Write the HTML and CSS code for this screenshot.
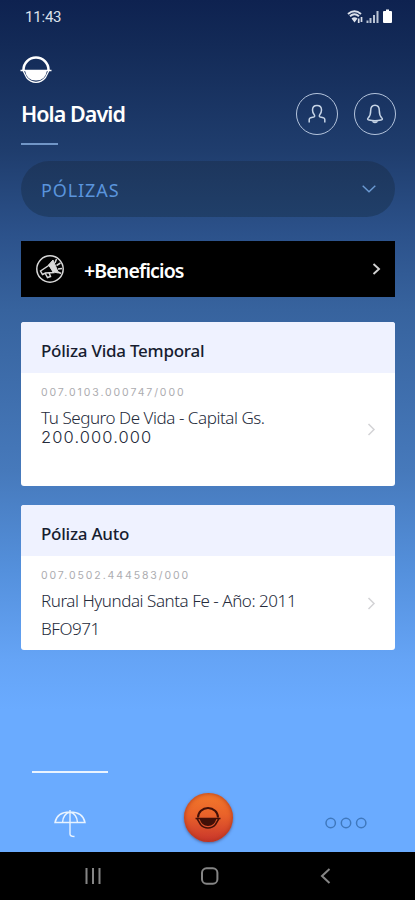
FILE: index.html
```html
<!DOCTYPE html>
<html lang="es">
<head>
    <meta charset="UTF-8">
    <meta name="viewport" content="width=device-width, initial-scale=1.0">
    <title>Pólizas</title>
    <link rel="stylesheet" href="styles.css">
</head>
<body>
    <div class="status-bar">
        <span class="time">11:43</span>
        <svg class="status-icons" width="46" height="16" viewBox="0 0 46 16" fill="none">
            <path d="M1 5Q7.500 -.500 14 5M3 7.300Q7.500 3.300 12 7.300" stroke="#dce1eb" stroke-width="2"/>
            <path d="M7.500 13.500l-3-4q3-2.500 6 0z" fill="#dce1eb"/>
            <path d="M11.700 14V9.500M14.500 8v5" stroke="#dce1eb" stroke-width="1.700"/>
            <path d="M20.500 14v-2.500M23.500 14V9M27 14V6M30.500 14V2" stroke="#bac4d5" stroke-width="2"/>
            <path d="M37 2h2V.500h3V2h2q1 0 1 1v10q0 1-1 1h-7q-1 0-1-1V3q0-1 1-1z" fill="#fff"/>
        </svg>
    </div>

    <header class="header">
        <div class="greeting">
            <svg class="logo" width="32" height="28" viewBox="0 0 32 28" fill="none">
                <path d="M3.500 14a12.500 12.500 0 0 1 25 0" stroke="#fff" stroke-width="2.600"/>
                <path d="M.500 14.500h31M3 14.500l3.500 7q4 4.800 9.500 4.800t9.500-4.800l3.500-7" stroke="#fff" stroke-width="1.300"/>
                <path d="M5 14.500h22q-1.500 10-11 10T5 14.500z" fill="#fff"/>
            </svg>
            <h1>Hola David</h1>
        </div>
        <div class="header-buttons">
            <a href="#" class="round-btn" aria-label="Perfil">
                <svg width="18" height="20" viewBox="0 0 18 20" fill="none" stroke="#c6d4e6" stroke-width="1.500">
                    <path d="M1.200 18.500v-3q0-1.300 1.500-1.700l3-.8q1.500-.5.700-2Q4.500 9 4.500 6 4.500 1.500 9 1.500T13.500 6q0 3-1.900 5-.8 1.500.7 2l3 .8q1.500.4 1.500 1.700v3"/>
                </svg>
            </a>
            <a href="#" class="round-btn" aria-label="Notificaciones">
                <svg width="18" height="20" viewBox="0 0 18 20" fill="none" stroke="#c6d4e6" stroke-width="1.500">
                    <path d="M9 1.200q-4.300 0-4.300 5.300 0 5-2.500 7.500-1.500 1.500.8 2 6 1.300 12 0 2.300-.5.800-2-2.500-2.500-2.500-7.500Q13.300 1.200 9 1.200zM6.500 16.500q.3 2 2.500 2t2.500-2"/>
                </svg>
            </a>
        </div>
    </header>

    <main class="content">
        <div class="select">
            <span>PÓLIZAS</span>
            <svg width="14" height="8" viewBox="0 0 14 8" fill="none" stroke="#6c9bd4" stroke-width="1.400">
                <path d="M.7.800L7 6.800 13.300.800"/>
            </svg>
        </div>

        <a href="#" class="benefits">
            <svg class="megaphone" width="30" height="30" viewBox="0 0 30 30" fill="none" stroke="#d8d8d8">
                <circle cx="15" cy="15" r="13.200" stroke-width="1.500"/>
                <path d="M5.500 17l9-6 4 7.500-8 .500-3 1.500z" stroke-width="1.500"/>
                <path d="M13.500 11l4.500-5 5.500 13-5-1z" fill="#d8d8d8"/>
                <path d="M10 19l2.500 4.500 3-1-1.500-4M20 9l1.500-4M21.500 11.500l4-2.500M23 15l4-.500M23 18l3 1.500" stroke-width="1.500"/>
            </svg>
            <span>+Beneficios</span>
            <svg class="arrow" width="9" height="12" viewBox="0 0 9 12" fill="none" stroke="#d2d2d2" stroke-width="1.900">
                <path d="M1.500 1L7 6l-5.500 5"/>
            </svg>
        </a>

        <section class="card card-life">
            <h2>Póliza Vida Temporal</h2>
            <div class="card-body">
                <div class="card-text">
                    <p class="number">007.0103.000747/000</p>
                    <p class="detail">Tu Seguro De Vida - Capital Gs.</p>
                    <p class="detail amount">200.000.000</p>
                </div>
                <svg class="arrow" width="9" height="13" viewBox="0 0 9 13" fill="none" stroke="#d3d3d6" stroke-width="1.500">
                    <path d="M1.500 1L7 6.500l-5.500 5.500"/>
                </svg>
            </div>
        </section>

        <section class="card card-auto">
            <h2>Póliza Auto</h2>
            <div class="card-body">
                <div class="card-text">
                    <p class="number">007.0502.444583/000</p>
                    <p class="detail">Rural Hyundai Santa Fe - Año: 2011</p>
                    <p class="detail plate">BFO971</p>
                </div>
                <svg class="arrow" width="9" height="13" viewBox="0 0 9 13" fill="none" stroke="#d3d3d6" stroke-width="1.500">
                    <path d="M1.500 1L7 6.500l-5.500 5.500"/>
                </svg>
            </div>
        </section>
    </main>

    <nav class="tabs">
        <a href="#" class="tab active" aria-label="Pólizas">
            <svg width="32" height="28" viewBox="0 0 32 28" fill="none" stroke="#e8f3ff" stroke-width="1.400">
                <path d="M1 12.500Q3 2 16 2t15 10.500zM8.500 12.500Q9 4 16 2q7 2 7.500 10.500M16 0v24q0 2.500 4.500 2.500"/>
            </svg>
        </a>
        <a href="#" class="tab" aria-label="Inicio">
            <span class="home-btn">
                <svg width="26" height="22" viewBox="0 0 26 22" fill="none" stroke="#421008">
                    <path d="M3 10.500a10 9.500 0 0 1 20 0" stroke-width="2"/>
                    <path d="M.500 11.500h25M2 11.500l3.500 6q3 3.500 7.500 3.500t7.500-3.500l3.500-6" stroke-width="1.500"/>
                    <path d="M4.500 11.500h17q-2 7.500-8.500 7.500t-8.500-7.500z" fill="#421008" stroke="none"/>
                </svg>
            </span>
        </a>
        <a href="#" class="tab" aria-label="Más">
            <svg width="42" height="12" viewBox="0 0 42 12" fill="none" stroke="#3f78bd" stroke-width="1.500">
                <circle cx="5.700" cy="6" r="4.700"/>
                <circle cx="21" cy="6" r="4.700"/>
                <circle cx="36.200" cy="6" r="4.700"/>
            </svg>
        </a>
    </nav>

    <footer class="system-nav">
        <svg width="16" height="16" viewBox="0 0 16 16" stroke="#858585" stroke-width="2">
            <path d="M1.500 0v16M8 0v16M14.500 0v16"/>
        </svg>
        <svg width="20" height="18" viewBox="0 0 20 18" fill="none" stroke="#858585" stroke-width="2">
            <rect x="1" y="1.300" width="15.400" height="15.400" rx="4.500"/>
        </svg>
        <svg width="11" height="16" viewBox="0 0 11 16" fill="none" stroke="#858585" stroke-width="2">
            <path d="M9.500 1L2 8l7.500 7"/>
        </svg>
    </footer>
</body>
</html>
```
FILE: styles.css
```css
* {
    box-sizing: border-box;
}

body {
    margin: 0;
    height: 900px;
    display: flex;
    flex-direction: column;
    overflow: hidden;
    font-family: "Noto Sans", sans-serif;
    background: linear-gradient(#0e2250 0, #132a57 45px, #1f3d6d 150px, #2c528b 235px, #37639e 310px, #4679bb 470px, #5490dc 570px, #65a4f6 660px, #6aabff 710px);
}

h1,
h2,
p {
    margin: 0;
    white-space: nowrap;
}

a {
    text-decoration: none;
}

svg {
    display: block;
    flex: none;
}

.status-bar {
    height: 34px;
    padding: 0 22px 0 25px;
    display: flex;
    justify-content: space-between;
    align-items: center;
}

.time {
    font-family: Roboto, sans-serif;
    font-size: 15px;
    letter-spacing: -0.2px;
    color: #dce1eb;
}

.header {
    height: 127px;
    padding: 22px 19px 0 21px;
    display: flex;
    justify-content: space-between;
}

.logo {
    margin-left: -1px;
}

.greeting h1 {
    margin-top: 14px;
    font-size: 21.5px;
    line-height: 32px;
    font-weight: 600;
    letter-spacing: -0.95px;
    color: #fff;
}

.greeting::after {
    content: '';
    display: block;
    width: 37px;
    height: 2px;
    margin-top: 13px;
    background-color: #7196c7;
}

.header-buttons {
    display: flex;
    gap: 16px;
    padding-top: 37px;
}

.round-btn {
    width: 42px;
    height: 42px;
    display: flex;
    justify-content: center;
    align-items: center;
    border: 1.5px solid #b4c4dc;
    border-radius: 50%;
}

.content {
    padding: 0 20px 0 21px;
}

.select {
    height: 56px;
    padding: 0 19px 0 20px;
    display: flex;
    justify-content: space-between;
    align-items: center;
    border-radius: 28px;
    background: linear-gradient(#1d365d, #203f69);
    color: #5a94dc;
    font-size: 18px;
    letter-spacing: 0.9px;
}

.select span {
    padding-top: 2px;
}

.benefits {
    height: 56px;
    margin-top: 24px;
    padding: 0 14px;
    display: flex;
    align-items: center;
    background-color: #000;
    color: #fff;
    font-size: 19.5px;
    font-weight: 600;
    letter-spacing: -0.85px;
}

.benefits span {
    flex: 1;
    margin-left: 19px;
    padding-top: 2px;
}

.card {
    border-radius: 3px;
    background-color: #fff;
    overflow: hidden;
}

.card-life {
    height: 164px;
    margin-top: 25px;
}

.card-auto {
    height: 145px;
    margin-top: 19px;
}

.card h2 {
    height: 51px;
    padding: 4px 20px 0;
    line-height: 50px;
    font-size: 17px;
    font-weight: 500;
    letter-spacing: -0.25px;
    color: #171d30;
    background-color: #eff2ff;
}

.card-body {
    padding: 12px 19px 0 20px;
    display: flex;
    justify-content: space-between;
}

.card-body .arrow {
    margin-top: 38px;
}

.card-auto .arrow {
    margin-top: 29px;
}

.number {
    height: 14px;
    font-family: Inter, sans-serif;
    font-size: 10.5px;
    line-height: 16px;
    letter-spacing: 1.9px;
    color: #acacb0;
}

.detail {
    margin-top: 10px;
    font-size: 17px;
    line-height: 18px;
    font-weight: 300;
    letter-spacing: -0.45px;
    color: #252b3b;
}

.amount {
    margin-top: 1px;
    font-family: Inter, sans-serif;
    font-size: 16.5px;
    letter-spacing: 1.1px;
}

.plate {
    margin-top: 10px;
}

.tabs {
    margin-top: auto;
    height: 82px;
    padding: 0 0 0 1px;
    display: grid;
    grid-template-columns: 1fr 1fr 1fr;
}

.tab {
    display: flex;
    flex-direction: column;
    align-items: center;
    padding-top: 47px;
}

.tab.active {
    padding-top: 1px;
}

.tab.active::before {
    content: '';
    width: 76px;
    height: 2px;
    margin-bottom: 37px;
    background-color: #eaf4ff;
}

.home-btn {
    width: 49px;
    height: 49px;
    margin-top: -24px;
    display: flex;
    justify-content: center;
    align-items: center;
    border-radius: 50%;
    background: linear-gradient(#f37a2b 0%, #e9622a 45%, #c8352c 100%);
    box-shadow: inset 0 0 5px #a93218, 0 1px 3px rgba(58, 50, 80, 0.6);
}

.system-nav {
    height: 48px;
    padding: 0 84px 0 85px;
    display: flex;
    justify-content: space-between;
    align-items: center;
    background-color: #000;
}
```
